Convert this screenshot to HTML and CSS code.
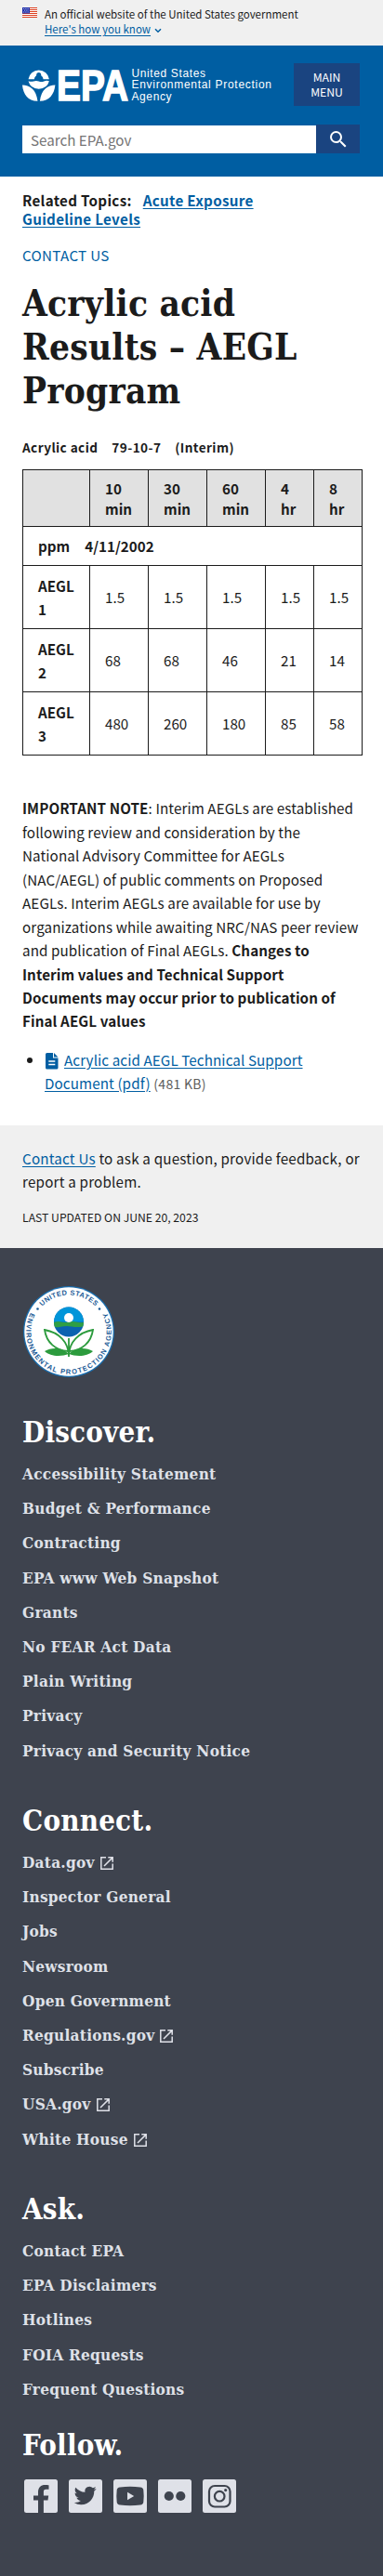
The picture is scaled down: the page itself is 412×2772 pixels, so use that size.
FILE: index.html
```html
<!DOCTYPE html>
<html lang="en">
<head>
<meta charset="utf-8">
<meta name="viewport" content="width=device-width, initial-scale=1">
<title>Acrylic acid Results - AEGL Program | US EPA</title>
<link rel="stylesheet" href="styles.css">
</head>
<body>
<svg class="sprite" aria-hidden="true">
  <symbol id="launch" viewBox="0 0 14 14"><path d="M6 .8H.8v12.4h12.400V7.500M8.300.8h4.900v4.900M12.900 1.100 4 10" fill="none" stroke="currentColor" stroke-width="1.500"/></symbol>
</svg>

<div class="banner">
  <svg class="flag" viewBox="0 0 16 11"><path fill="#fff" d="M0 0h16v11H0z"/><path d="M0 .5h16M0 2.500h16M0 4.500h16M0 6.500h16M0 8.500h16M0 10.500h16" stroke="#db3e1f"/><path fill="#1f2faa" d="M0 0h8v6.500H0z"/><path d="M1 1.500h6M2 3.200h5M1 5h6" stroke="#fff" stroke-width=".8" stroke-dasharray=".8 1"/></svg>
  <div class="banner-text">
    <p>An official website of the United States government</p>
    <p><a class="know" href="#">Here's how you know</a><svg class="chev" viewBox="0 0 8 6"><path d="M1 1.200 4 4.200l3-3" fill="none" stroke="#005ea2" stroke-width="1.500"/></svg></p>
  </div>
</div>

<header class="header">
  <div class="brand-row">
    <svg class="logo" viewBox="0 0 270 42">
      <g fill="#fff">
        <path d="M6.500 12.300a11.300 11.300 0 0 1 22.400 0h-6.400a4.800 4.800 0 0 0-9.600 0z"/>
        <circle cx="17.700" cy="7.500" r="2.500" fill="#005ea2"/>
        <path d="M6.500 14.200q2.800 1.200 5.600.2t5.600 0 5.600 0 5.600-.2q-2.200 8.200-11.200 8.500-9-.3-11.200-8.500z"/>
        <path d="M0 18.500c8 .5 15 4.500 16.500 17.300C6.500 36 1 29 0 18.500zM35.400 18.500c-8 .5-15 4.500-16.500 17.300 10-.0 15.500-7.300 16.500-17.300z"/>
      </g>
      <text class="logo-mark" x="37" y="34.800" textLength="77" lengthAdjust="spacingAndGlyphs">EPA</text>
      <g class="logo-name"><text x="117.500" y="9.500" textLength="79.500">United States</text><text x="117.500" y="22" textLength="150.500">Environmental Protection</text><text x="117.500" y="34.700" textLength="43">Agency</text></g>
    </svg>
    <button class="menu">MAIN<br>MENU</button>
  </div>
  <form class="search">
    <input type="text" placeholder="Search EPA.gov" aria-label="Search">
    <button type="button" aria-label="Search"><svg viewBox="0 0 24 24"><path fill="#fff" d="M15.500 14h-.79l-.28-.27A6.470 6.470 0 0 0 16 9.500 6.500 6.500 0 1 0 9.500 16c1.610 0 3.090-.59 4.230-1.570l.27.28v.79l5 4.990L20.490 19l-4.990-5zm-6 0C7.010 14 5 11.990 5 9.500S7.010 5 9.500 5 14 7.010 14 9.500 11.990 14 9.500 14z"/></svg></button>
  </form>
</header>

<main class="main">
  <p class="related">Related Topics:<a href="#">Acute Exposure Guideline Levels</a></p>
  <p class="contact"><a href="#">CONTACT US</a></p>
  <h1>Acrylic acid<br>Results – AEGL<br>Program</h1>
  <table>
    <caption><span>Acrylic acid</span><span>79-10-7</span><span>(Interim)</span></caption>
    <colgroup><col class="c-name"><col class="c-min"><col class="c-min"><col class="c-min"><col class="c-hr"><col class="c-hr"></colgroup>
    <thead><tr><th></th><th>10 min</th><th>30 min</th><th>60 min</th><th>4<br>hr</th><th>8<br>hr</th></tr></thead>
    <tbody>
      <tr class="unit"><th colspan="6"><span>ppm</span><span>4/11/2002</span></th></tr>
      <tr><th>AEGL<br>1</th><td>1.5</td><td>1.5</td><td>1.5</td><td>1.5</td><td>1.5</td></tr>
      <tr><th>AEGL<br>2</th><td>68</td><td>68</td><td>46</td><td>21</td><td>14</td></tr>
      <tr><th>AEGL<br>3</th><td>480</td><td>260</td><td>180</td><td>85</td><td>58</td></tr>
    </tbody>
  </table>
  <p class="note"><b>IMPORTANT NOTE</b>: Interim AEGLs are established<br>following review and consideration by the<br>National Advisory Committee for AEGLs<br>(NAC/AEGL) of public comments on Proposed<br>AEGLs. Interim AEGLs are available for use by<br>organizations while awaiting NRC/NAS peer review<br>and publication of Final AEGLs. <b>Changes to<br>Interim values and Technical Support<br>Documents may occur prior to publication of<br>Final AEGL values</b></p>
  <ul class="files"><li><svg class="doc" viewBox="0 0 14 18"><path fill="#005ea2" d="M1.500 0H8v5.500h5.500V16a1.500 1.500 0 0 1-1.500 1.500H1.500A1.500 1.500 0 0 1 0 16V1.500A1.500 1.500 0 0 1 1.500 0zM9 0l4.500 4.500H9z"/><path d="M3.300 9h7M3.300 12.500h7" stroke="#fff" stroke-width="1.300"/></svg><a href="#">Acrylic acid AEGL Technical Support<br>Document (pdf)</a> <span class="size">(481 KB)</span></li></ul>
</main>

<section class="feedback">
  <p><a href="#">Contact Us</a> to ask a question, provide feedback, or<br>report a problem.</p>
  <p class="updated">LAST UPDATED ON JUNE 20, 2023</p>
</section>

<footer class="footer">
  <svg class="seal" viewBox="0 0 100 100">
    <defs>
      <path id="arc-top" d="M10.500 50a39.500 39.500 0 0 1 79 0"/>
      <path id="arc-low" d="M17.600 17.600A45.800 45.800 0 1 0 82.400 17.600"/>
    </defs>
    <circle cx="50" cy="50" r="49" fill="#1b6eae"/>
    <circle cx="50" cy="50" r="47.700" fill="#fff"/>
    <g class="seal-text">
      <text><textPath href="#arc-top" startOffset="50%" text-anchor="middle" textLength="64">UNITED STATES</textPath></text>
      <text><textPath href="#arc-low" startOffset="50%" text-anchor="middle" textLength="186">ENVIRONMENTAL PROTECTION AGENCY</textPath></text>
    </g>
    <circle cx="16.500" cy="25.500" r="1.300" fill="#1a5a96"/><circle cx="83" cy="25.500" r="1.300" fill="#1a5a96"/>
    <circle cx="50" cy="39.500" r="16" fill="#0a62b0"/>
    <path fill="#0095d9" d="M34 39.500a16 16 0 0 1 32 0z"/>
    <path fill="#2f9e45" d="M34 40q4-1.500 8-.5t8 0 8 0 8 .5q0 2.500-.8 4.500-6 1-12 0t-12 .2-6.500-.2q-.7-2-.7-4.500z"/>
    <circle cx="50" cy="35" r="5" fill="#fff"/>
    <path d="M50 75c-1-14-10-24-26-27 2 14 12 22 25 23M50 75c1-14 10-24 26-27-2 14-12 22-25 23M50 57v20" fill="none" stroke="#2c9b3d" stroke-width="1.800"/>
    <path fill="#2c9b3d" d="M24 71c8-5 20-4 26 3-8 3-20 3-26-3zM76 71c-8-5-20-4-26 3 8 3 20 3 26-3z"/>
  </svg>
  <nav class="group discover"><h2>Discover.</h2><ul>
    <li>Accessibility Statement</li><li>Budget &amp; Performance</li><li>Contracting</li><li>EPA www Web Snapshot</li><li>Grants</li><li>No FEAR Act Data</li><li>Plain Writing</li><li>Privacy</li><li>Privacy and Security Notice</li></ul></nav>
  <nav class="group"><h2>Connect.</h2><ul>
    <li>Data.gov<svg class="ext"><use href="#launch"/></svg></li><li>Inspector General</li><li>Jobs</li><li>Newsroom</li><li>Open Government</li><li>Regulations.gov<svg class="ext"><use href="#launch"/></svg></li><li>Subscribe</li><li>USA.gov<svg class="ext"><use href="#launch"/></svg></li><li>White House<svg class="ext"><use href="#launch"/></svg></li></ul></nav>
  <nav class="group ask"><h2>Ask.</h2><ul>
    <li>Contact EPA</li><li>EPA Disclaimers</li><li>Hotlines</li><li>FOIA Requests</li><li>Frequent Questions</li></ul></nav>
  <div class="group follow"><h2>Follow.</h2>
    <div class="social">
      <svg viewBox="0 0 36 36"><rect width="36" height="36" rx="2.500"/><path class="ink" d="M15 36V22.500h-5v-5h5v-3.700C15 8.600 18 6 22.400 6c1.700 0 3.200.1 4.100.2v4.600h-2.900c-2.300 0-2.700 1.100-2.700 2.800v3.900h5.300l-.7 5h-4.600V36z"/></svg>
      <svg viewBox="0 0 36 36"><rect width="36" height="36" rx="2.500"/><path class="ink" transform="translate(5.700 5.500)" d="M23.950 4.570a10 10 0 0 1-2.820.770 4.960 4.960 0 0 0 2.160-2.720c-.95.550-2 .950-3.130 1.180a4.920 4.920 0 0 0-8.380 4.480C7.690 8.090 4.070 6.130 1.640 3.160a4.820 4.820 0 0 0-.66 2.470c0 1.710.87 3.210 2.190 4.100a4.900 4.900 0 0 1-2.230-.61v.06a4.920 4.920 0 0 0 3.950 4.830 5 5 0 0 1-2.210.08 4.940 4.940 0 0 0 4.600 3.420A9.870 9.870 0 0 1 0 19.540a13.990 13.990 0 0 0 7.560 2.210c9.050 0 14-7.500 14-13.980 0-.21 0-.42-.02-.63a9.940 9.940 0 0 0 2.410-2.570z"/></svg>
      <svg viewBox="0 0 36 36"><rect width="36" height="36" rx="2.500"/><path class="ink" d="M7 8.400q11-1.400 22 0 3 .4 3.300 3 .8 6.600 0 13.200-.3 2.600-3.300 3-11 1.200-22 0-3-.4-3.300-3-.8-6.600 0-13.200.3-2.600 3.300-3z"/><path d="M15 13.700v8.600l7.200-4.300z"/></svg>
      <svg viewBox="0 0 36 36"><rect width="36" height="36" rx="2.500"/><circle class="ink" cx="11.800" cy="18" r="5.100"/><circle class="ink" cx="24.300" cy="18" r="5.100"/></svg>
      <svg viewBox="0 0 36 36"><rect width="36" height="36" rx="2.500"/><g class="line"><rect x="7" y="7" width="22.500" height="22.500" rx="6"/><circle cx="18.200" cy="18.200" r="5.300"/></g><circle class="ink" cx="24.700" cy="11.600" r="1.600"/></svg>
    </div>
  </div>
</footer>
</body>
</html>
```

FILE: styles.css
```css
* { box-sizing: border-box; }
body {
  margin: 0;
  background: #fff;
  color: #1b1b1b;
  font-family: "Noto Sans CJK SC", "Noto Sans", sans-serif;
  font-size: 15.200px;
  line-height: 25.440px;
}
p, h1, h2, ul { margin: 0; padding: 0; }
a { color: #005ea2; text-underline-offset: 2px; }
.sprite { display: block; width: 0; height: 0; }

.banner {
  display: flex;
  gap: 8px;
  height: 49px;
  padding: 8px 24px 0;
  background: #f0f0f0;
  font-size: 11.500px;
  line-height: 16px;
}
.flag { width: 16px; height: 11px; flex: none; }
.banner-text { margin-top: -1px; }
.chev { width: 8px; height: 6px; margin-left: 4px; }

.header { height: 141px; padding: 19px 25px 0 24px; background: #005ea2; }
.brand-row { display: flex; justify-content: space-between; height: 46px; }
.logo { width: 270px; height: 42px; margin-top: 5px; flex: none; overflow: visible; }
.logo-mark { font: bold 46px "Liberation Sans", sans-serif; fill: #fff; stroke: #fff; stroke-width: 1.500px; }
.logo-name { font: 12px "Liberation Sans", sans-serif; fill: #fff; }
.menu {
  width: 71px;
  border: 0;
  padding: 0;
  background: #1a4480;
  color: #fff;
  font: 12.200px/16px "Noto Sans CJK SC", sans-serif;
}
.search { display: flex; height: 31px; margin-top: 20px; }
.search input {
  flex: 1;
  min-width: 0;
  margin: 1px 0 0;
  border: 1px solid #fff;
  padding: 0 8px;
  background: #fff;
  font: 15.200px "Noto Sans CJK SC", sans-serif;
}
.search input::placeholder { color: #757575; }
.search button { width: 47px; border: 0; padding: 0; background: #1a4480; }
.search svg { display: block; width: 24px; height: 24px; margin: 0 auto; }

.main { height: 1021px; padding: 15px 22px 0 24px; }
.related { font-weight: bold; line-height: 20px; width: 300px; letter-spacing: .3px; }
.related a { margin-left: 12px; }
.contact { margin-top: 17px; letter-spacing: .3px; }
.contact a { text-decoration: none; }
h1, h2, .group { font-family: "DejaVu Serif Condensed", "DejaVu Serif", serif; font-stretch: condensed; font-weight: bold; }
h1 { margin-top: 16px; font-size: 38.500px; line-height: 47px; letter-spacing: .2px; }
table { width: 366px; margin-top: 27px; table-layout: fixed; border-collapse: collapse; }
caption { text-align: left; font-weight: bold; font-size: 13.600px; line-height: 20px; padding-bottom: 14px; letter-spacing: .4px; }
caption span { margin-right: 15px; }
.c-name { width: 72px; }
.c-min { width: 63px; }
.c-hr { width: 52px; }
th, td { border: 1px solid #1b1b1b; padding: 0 0 0 16px; text-align: left; height: 68px; }
thead th { height: 61px; background: #e1e1e1; line-height: 22px; padding-right: 10px; }
.unit th { height: 42px; }
.unit span { margin-right: 16px; }
.note { margin-top: 44px; white-space: nowrap; letter-spacing: .1px; }
.files { margin-top: 16px; padding-left: 24px; white-space: nowrap; letter-spacing: .1px; }
.doc { width: 14px; height: 18px; margin: 0 6px 0 1px; vertical-align: -4px; }
.size { color: #5c5c5c; font-size: 14px; letter-spacing: .3px; }

.feedback { height: 132px; padding: 23px 24px 0; background: #f0f0f0; white-space: nowrap; letter-spacing: .2px; }
.updated { margin-top: 13px; font-size: 12.200px; letter-spacing: 0; }

.footer { height: 1429px; padding: 40px 24px 0; background: #3e434e; color: #dfe1e8; }
.seal { display: block; width: 100px; height: 100px; }
.seal-text { font: bold 7.500px "Liberation Sans", sans-serif; fill: #1a5a96; }
h2 { color: #fff; font-size: 31px; line-height: 40px; letter-spacing: .2px; }
.group { height: 418px; font-size: 17.100px; }
.discover { margin-top: 38px; }
.group ul { list-style: none; margin-top: 7px; letter-spacing: .25px; }
.group li { height: 37.200px; line-height: 37.200px; white-space: nowrap; }
.ask { height: 254px; }
.follow { height: auto; }
.ext { width: 14px; height: 14px; margin-left: 6px; vertical-align: -2px; }
.social { display: flex; gap: 12px; margin: 17px 2px 0; }
.social svg { width: 36px; height: 36px; fill: #dfe1e8; }
.social .ink { fill: #3e434e; }
.social .line { fill: none; stroke: #3e434e; stroke-width: 2.200; }
```
